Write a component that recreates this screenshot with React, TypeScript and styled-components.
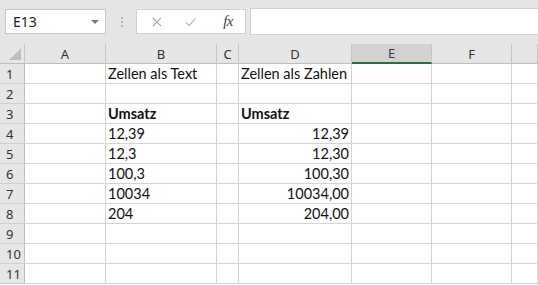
import React from 'react';
import styled, { createGlobalStyle } from 'styled-components';

const GlobalStyle = createGlobalStyle`
  html, body {
    margin: 0;
    padding: 0;
    background: #ffffff;
    overflow: hidden;
  }
`;

const Window = styled.div`
  width: 538px;
  height: 285px;
  overflow: hidden;
  background: #ffffff;
  font-family: 'Noto Sans', 'Open Sans', sans-serif;
`;

const Toolbar = styled.div`
  display: flex;
  align-items: center;
  height: 44px;
  padding: 0 0 1px 5px;
  box-sizing: border-box;
  background: #e6e6e6;
`;

const NameBox = styled.div`
  display: flex;
  align-items: center;
  justify-content: space-between;
  width: 101px;
  height: 25px;
  box-sizing: border-box;
  padding: 0 6px 0 7px;
  background: #ffffff;
  border: 1px solid #c6c6c6;
  font-size: 14px;
  color: #222;
`;

const Caret = styled.span`
  width: 0;
  height: 0;
  border-left: 4px solid transparent;
  border-right: 4px solid transparent;
  border-top: 4px solid #7a7a7a;
`;

const Grip = styled.div`
  display: flex;
  flex-direction: column;
  gap: 2px;
  margin: 0 13px 0 15px;
  span {
    width: 2px;
    height: 2px;
    background: #b4b4b4;
  }
`;

const FormulaButtons = styled.div`
  display: flex;
  align-items: center;
  width: 110px;
  height: 25px;
  box-sizing: border-box;
  padding: 0 12px 0 15px;
  background: #ffffff;
  border: 1px solid #d0d0d0;
  gap: 23px;
`;

const Fx = styled.span`
  margin-left: 4px;
  font-family: 'Liberation Serif', serif;
  font-style: italic;
  font-size: 15px;
  color: #444;
  letter-spacing: -0.5px;
`;

const FormulaInput = styled.div`
  flex: 1;
  height: 25px;
  margin-left: 4px;
  background: #ffffff;
  border: 1px solid #d0d0d0;
  border-right: none;
`;

const Sheet = styled.div`
  display: grid;
  grid-template-columns: 25px 81px 111px 22px 113px 80px 80px 1fr;
  grid-auto-rows: 20px;
`;

const Corner = styled.div`
  position: relative;
  background: #e6e6e6;
  border-right: 1px solid #c6c6c6;
  border-bottom: 1px solid #bdbdbd;
  &::after {
    content: '';
    position: absolute;
    right: 3px;
    bottom: 3px;
    width: 0;
    height: 0;
    border-left: 12px solid transparent;
    border-bottom: 12px solid #bfbfbf;
  }
`;

const ColHead = styled.div<{ $active?: boolean }>`
  display: flex;
  align-items: center;
  justify-content: center;
  box-sizing: border-box;
  background: ${p => (p.$active ? '#d2d2d2' : '#e6e6e6')};
  border-right: 1px solid #c6c6c6;
  border-bottom: ${p => (p.$active ? '2px solid #217346' : '1px solid #bdbdbd')};
  color: ${p => (p.$active ? '#3a3a3a' : '#333')};
  font-size: 13px;
`;

const RowHead = styled.div`
  display: flex;
  align-items: center;
  padding-left: 6px;
  box-sizing: border-box;
  background: #e6e6e6;
  border-right: 1px solid #bdbdbd;
  border-bottom: 1px solid #cfcfcf;
  color: #333;
  font-size: 13px;
`;

const Cell = styled.div<{ $bold?: boolean; $right?: boolean }>`
  display: flex;
  align-items: center;
  justify-content: ${p => (p.$right ? 'flex-end' : 'flex-start')};
  box-sizing: border-box;
  padding: 0 2px 0 2px;
  border-right: 1px solid #d4d4d4;
  border-bottom: 1px solid #d4d4d4;
  font-family: 'Lato', 'Open Sans', sans-serif;
  font-size: 14.5px;
  font-weight: ${p => (p.$bold ? 700 : 400)};
  color: #111;
  white-space: nowrap;
  overflow: visible;
`;

const columns = ['A', 'B', 'C', 'D', 'E', 'F', ''];

type Row = { b?: string; d?: string; bold?: boolean };

const rows: Row[] = [
  { b: 'Zellen als Text', d: 'Zellen als Zahlen' },
  {},
  { b: 'Umsatz', d: 'Umsatz', bold: true },
  { b: '12,39', d: '12,39' },
  { b: '12,3', d: '12,30' },
  { b: '100,3', d: '100,30' },
  { b: '10034', d: '10034,00' },
  { b: '204', d: '204,00' },
  {},
  {},
  {},
];

const Cross = () => (
  <svg width="12" height="12" viewBox="0 0 12 12">
    <path d="M1 1 L11 11 M11 1 L1 11" stroke="#a8a8a8" strokeWidth="1.4" fill="none" />
  </svg>
);

const Check = () => (
  <svg width="14" height="12" viewBox="0 0 14 12">
    <path d="M1 6.5 L5 10.5 L13 1.5" stroke="#b8b8b8" strokeWidth="1.6" fill="none" />
  </svg>
);

export default function App() {
  return (
    <Window>
      <GlobalStyle />
      <Toolbar>
        <NameBox>
          E13
          <Caret />
        </NameBox>
        <Grip>
          <span />
          <span />
          <span />
        </Grip>
        <FormulaButtons>
          <Cross />
          <Check />
          <Fx>fx</Fx>
        </FormulaButtons>
        <FormulaInput />
      </Toolbar>
      <Sheet>
        <Corner />
        {columns.map((c, i) => (
          <ColHead key={i} $active={c === 'E'}>
            {c}
          </ColHead>
        ))}
        {rows.map((r, i) => (
          <React.Fragment key={i}>
            <RowHead>{i + 1}</RowHead>
            <Cell />
            <Cell $bold={r.bold}>{r.b}</Cell>
            <Cell />
            <Cell $bold={r.bold} $right={!r.bold && i > 2}>
              {r.d}
            </Cell>
            <Cell />
            <Cell />
            <Cell />
          </React.Fragment>
        ))}
      </Sheet>
    </Window>
  );
}
